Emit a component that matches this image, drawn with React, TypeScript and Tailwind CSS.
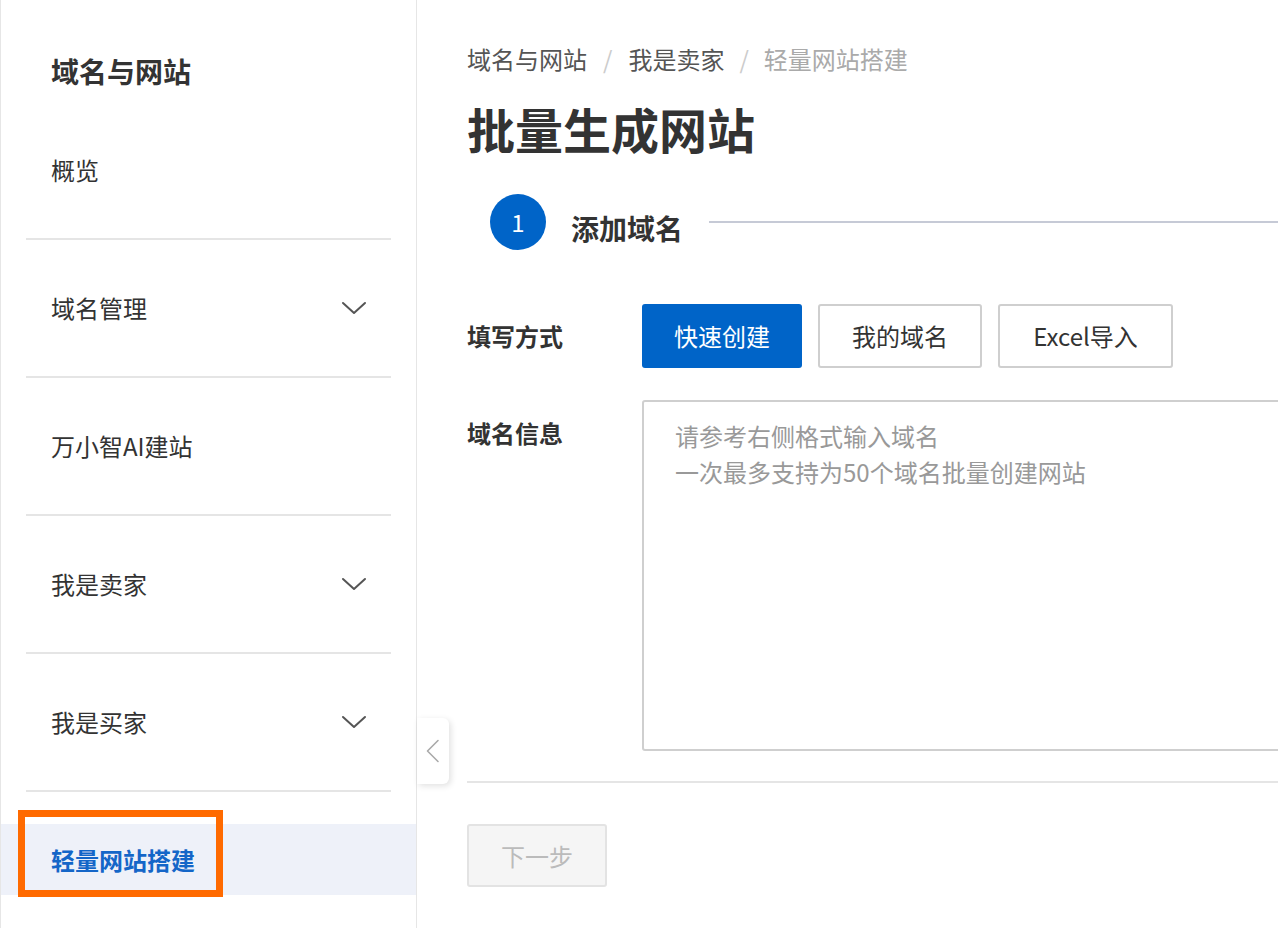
import { useState } from 'react';

const font = { fontFamily: '"Noto Sans CJK SC", "Noto Sans", sans-serif' };

const menuItems = [
  { label: '概览', hasChildren: false },
  { label: '域名管理', hasChildren: true },
  { label: '万小智AI建站', hasChildren: false },
  { label: '我是卖家', hasChildren: true },
  { label: '我是买家', hasChildren: true },
];

const methods = [
  { label: '快速创建', width: 'w-[160px]' },
  { label: '我的域名', width: 'w-[164px]' },
  { label: 'Excel导入', width: 'w-[175px]' },
];

function ChevronDown() {
  return (
    <svg width="26" height="14" viewBox="0 0 26 14" fill="none">
      <polyline points="2,2 13,12 24,2" stroke="#555" strokeWidth="2" strokeLinecap="round" strokeLinejoin="round" />
    </svg>
  );
}

export default function App() {
  const [method, setMethod] = useState('快速创建');

  return (
    <div className="flex h-[928px] w-[1278px] overflow-hidden bg-white text-[#333]" style={font}>
      {/* Sidebar */}
      <aside className="relative flex h-full w-[417px] shrink-0 flex-col border-l border-r border-[#e6e6e6]">
        <div className="h-[102px] pl-[50px] pt-[52px] text-[28px] font-bold leading-[38px]">域名与网站</div>
        {menuItems.map((m) => (
          <div
            key={m.label}
            className="mx-[25px] flex h-[138px] items-center justify-between border-b-2 border-[#e5e5e5] pl-[25px] pr-[24px] text-[24px]"
          >
            <span>{m.label}</span>
            {m.hasChildren && <ChevronDown />}
          </div>
        ))}
        <div className="relative mt-[32px] flex h-[71px] items-center bg-[#eef1f9] pl-[50px] text-[24px] font-bold text-[#1466c8]">
          轻量网站搭建
          <div className="absolute left-[17px] top-[-14px] h-[87px] w-[205px] border-[7px] border-[#ff6a00]" />
        </div>

        {/* Collapse tab */}
        <div className="absolute left-[416px] top-[718px] flex h-[66px] w-[32px] items-center justify-center rounded-r-md bg-white shadow-[2px_2px_6px_rgba(0,0,0,0.12)]">
          <svg width="16" height="24" viewBox="0 0 16 24" fill="none">
            <polyline points="13,1.5 2.5,12 13,22.5" stroke="#aaa" strokeWidth="1.6" strokeLinecap="round" strokeLinejoin="round" />
          </svg>
        </div>
      </aside>

      {/* Main */}
      <main className="min-w-0 flex-1 overflow-hidden pl-[50px] pt-[43px]">
        <div className="w-[900px]">
          <div className="flex items-center text-[24px] leading-[32px]">
            <span className="text-[#555]">域名与网站</span>
            <span className="mx-[16px] text-[#ccc]">/</span>
            <span className="text-[#555]">我是卖家</span>
            <span className="mx-[15px] text-[#ccc]">/</span>
            <span className="text-[#aaa]">轻量网站搭建</span>
          </div>
          <h1 className="mt-[25px] text-[48px] font-bold leading-[56px]">批量生成网站</h1>

          {/* Step */}
          <div className="mt-[38px] flex items-center pl-[23px]">
            <div className="flex h-[56px] w-[56px] items-center justify-center rounded-full bg-[#0064c8] text-[24px] text-white">
              1
            </div>
            <span className="ml-[25px] translate-y-[6px] text-[28px] font-bold">添加域名</span>
            <div className="ml-[26px] h-[2px] flex-1 bg-[#c6cad6]" />
          </div>

          {/* Method row */}
          <div className="mt-[54px] flex items-center">
            <div className="w-[175px] text-[24px] font-bold">填写方式</div>
            <div className="flex gap-[16px]">
              {methods.map((m) => (
                <button
                  key={m.label}
                  onClick={() => setMethod(m.label)}
                  className={`h-[64px] rounded-[3px] text-[24px] ${m.width} ${
                    method === m.label
                      ? 'bg-[#0064c8] text-white'
                      : 'border-2 border-[#cfcfcf] bg-white text-[#333]'
                  }`}
                >
                  {m.label}
                </button>
              ))}
            </div>
          </div>

          {/* Domain info */}
          <div className="mt-[32px] flex items-start">
            <div className="w-[175px] pt-[17px] text-[24px] font-bold leading-[32px]">域名信息</div>
            <textarea
              className="h-[351px] flex-1 resize-none rounded-[3px] border-2 border-[#cfcfcf] px-[31px] pt-[16px] text-[24px] leading-[36px] text-[#333] outline-none placeholder:text-[#999]"
              placeholder={'请参考右侧格式输入域名\n一次最多支持为50个域名批量创建网站'}
            />
          </div>

          <div className="mt-[30px] h-[2px] bg-[#e5e5e5]" />

          <button
            disabled
            className="mt-[41px] h-[63px] w-[140px] rounded-[3px] border-2 border-[#e3e3e3] bg-[#f5f5f5] text-[24px] text-[#bbb]"
          >
            下一步
          </button>
        </div>
      </main>
    </div>
  );
}
